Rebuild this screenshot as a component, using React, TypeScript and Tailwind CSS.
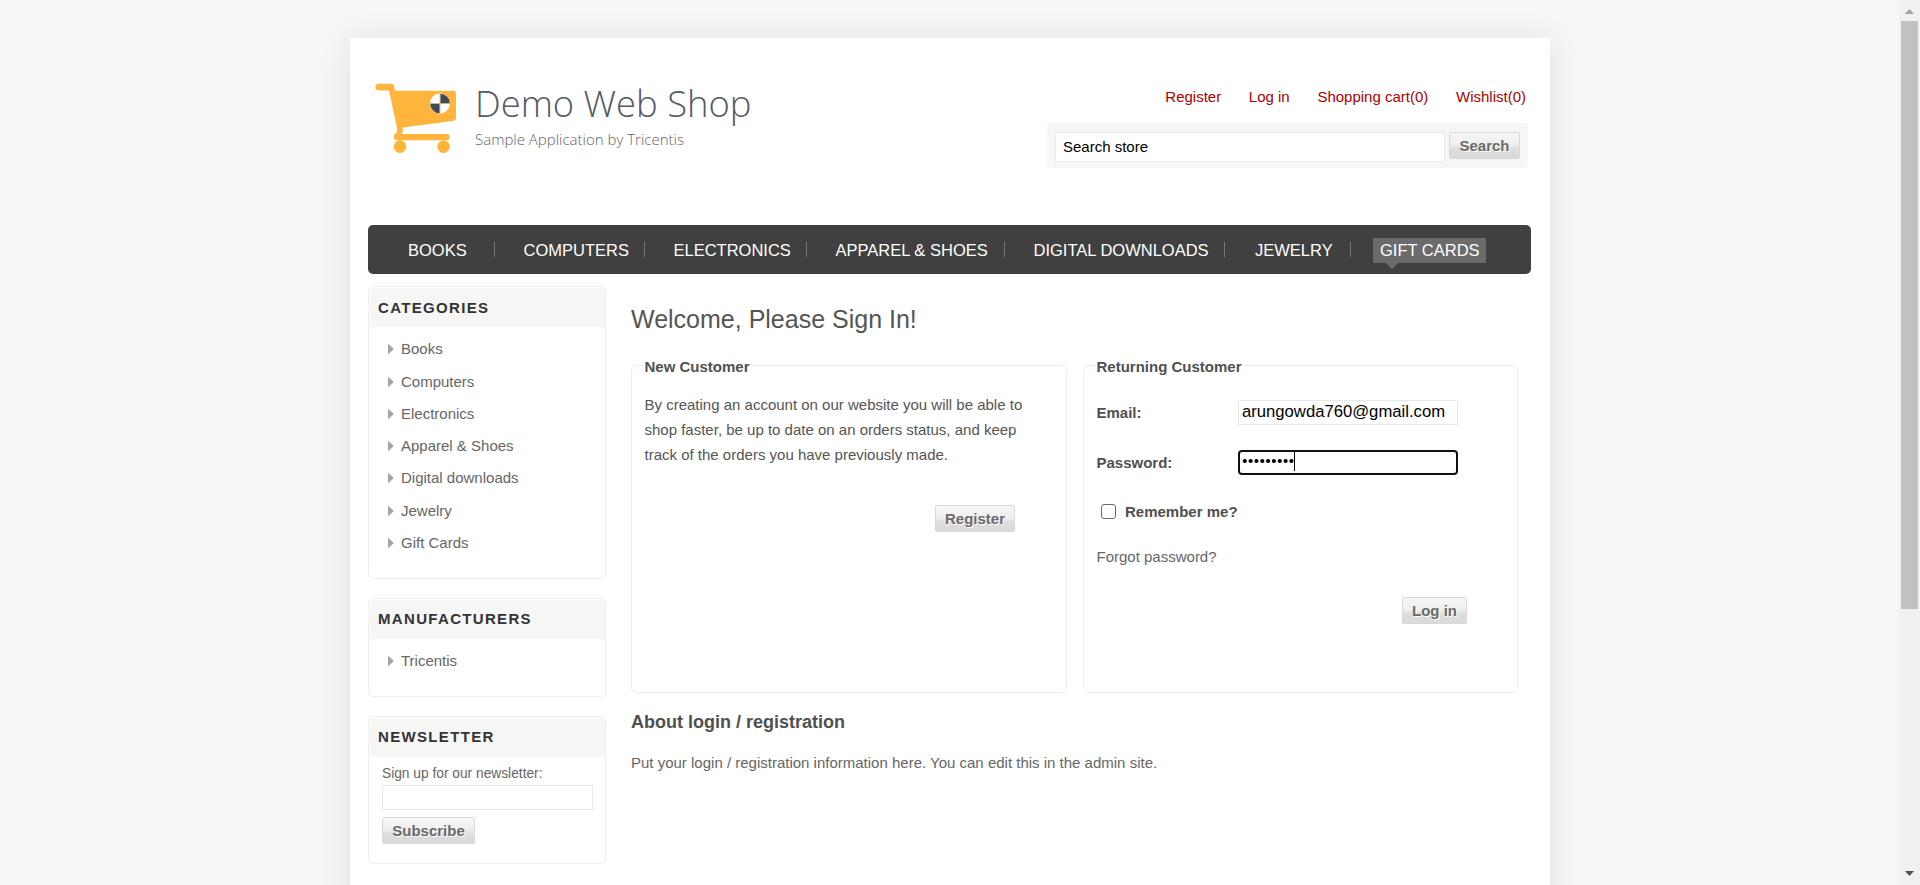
import type { ReactNode } from "react";

const NAV = [
  { label: "BOOKS", item: "w-[127px] pl-[40px]" },
  { label: "COMPUTERS", item: "w-[150px] pl-[28.5px]" },
  { label: "ELECTRONICS", item: "w-[162px] pl-[28.5px]" },
  { label: "APPAREL & SHOES", item: "w-[198px] pl-[28.5px]" },
  { label: "DIGITAL DOWNLOADS", item: "w-[220px] pl-[28.5px]" },
  { label: "JEWELRY", item: "w-[126px] pl-[30px]" },
];

const CATEGORIES = [
  "Books",
  "Computers",
  "Electronics",
  "Apparel & Shoes",
  "Digital downloads",
  "Jewelry",
  "Gift Cards",
];

function Button({ children, className }: { children: ReactNode; className: string }) {
  return (
    <button
      type="button"
      className={`h-[27px] rounded-[2px] border border-[#d9d9d9] bg-[linear-gradient(#f6f6f6_0%,#efefef_45%,#dddddd_65%,#dadada_100%)] text-center text-[15px] leading-[25px] font-bold text-[#6a6a6a] [text-shadow:1px_1px_0_#fff] ${className}`}
    >
      {children}
    </button>
  );
}

function Block({
  title,
  className,
  heading = "leading-[38px]",
  children,
}: {
  title: string;
  className: string;
  heading?: string;
  children: ReactNode;
}) {
  return (
    <section className={`w-[238px] rounded-[5px] border border-[#eee] pt-px pl-px ${className}`}>
      <h2 className={`h-[39px] rounded-t-[5px] bg-[#f6f6f4] pl-[8px] text-[15px] font-bold tracking-[1.33px] text-[#333] ${heading}`}>
        {title}
      </h2>
      {children}
    </section>
  );
}

function LinkItem({ label }: { label: string }) {
  return (
    <li className="flex h-[32.25px] items-center text-[15px] leading-[20px]">
      <svg width="6" height="12" viewBox="0 0 6 12" className="mr-[7px]">
        <path d="M0 0.5 L5.8 6 L0 11.5 Z" fill="#a5a5a5" />
      </svg>
      {label}
    </li>
  );
}

function Logo() {
  return (
    <div className="flex pt-[45px] pl-[25px]">
      <svg width="82" height="71" viewBox="0 0 82 71">
        <g fill="#ffb43c">
          <path d="M3.5 0.8 H16 Q18.5 0.8 19 3 L20 7.7 H78 Q81 7.7 81 10.7 V34.5 Q81 37.5 77.5 38 L27.5 44.5 L28 48 L26.5 51 H72 Q74.6 51.2 74.6 54 Q74.6 57 72 57.2 H22 Q18.7 57 18.9 53.5 Q19 51.5 21.8 49.5 L22.3 46 L14 7.4 H3.5 Q0.5 7.2 0.5 4 Q0.5 1 3.5 0.8 Z" />
          <circle cx="25" cy="63.6" r="6.3" />
          <circle cx="68.5" cy="63.6" r="6.3" />
        </g>
        <circle cx="65" cy="20.5" r="10" fill="#fff" />
        <path d="M65.3 20.2 V10.7 A9.6 9.6 0 0 1 74.8 20.2 Z M64.7 20.8 V30.3 A9.6 9.6 0 0 1 55.2 20.8 Z" fill="#444a54" />
        <path d="M65 10.5 V30.5 M55 20.5 H75" stroke="#c9a878" strokeWidth="0.8" />
      </svg>
      <div className="pl-[18px] font-['Open_Sans',sans-serif] font-light">
        <div className="h-[46px] text-[36.4px] leading-[40px] whitespace-nowrap text-[#555a64]">Demo Web Shop</div>
        <div className="text-[15px] leading-[20px] whitespace-nowrap text-[#5f636c]">Sample Application by Tricentis</div>
      </div>
    </div>
  );
}

function Header() {
  return (
    <header className="flex h-[187px] justify-between">
      <Logo />
      <div className="mr-[22px] flex w-[481px] flex-col pt-[48px]">
        <div className="flex justify-end gap-[27.7px] pr-[2px] text-[15px] leading-[22px] text-[#a00]">
          <a>Register</a>
          <a>Log in</a>
          <a>Shopping cart(0)</a>
          <a>Wishlist(0)</a>
        </div>
        <div className="mt-[15px] flex h-[45px] rounded-[3px] bg-[#f6f6f4] pt-[9px] pl-[8px]">
          <input
            readOnly
            value="Search store"
            className="h-[30px] w-[390px] border border-[#eaeaea] bg-white pb-[2px] pl-[7px] text-[15px] text-black outline-none"
          />
          <Button className="ml-[4px] w-[71px]">Search</Button>
        </div>
      </div>
    </header>
  );
}

function Nav() {
  return (
    <nav className="ml-[18px] flex h-[49px] w-[1163px] rounded-[5px] bg-[#404040] text-[16.5px] leading-[25px] whitespace-nowrap text-white">
      {NAV.map(({ label, item }) => (
        <div key={label} className={`flex justify-between pt-[13px] ${item}`}>
          {label}
          <span className="mt-[4px] h-[15px] w-px bg-[#777]" />
        </div>
      ))}
      <div className="relative mt-[13px] ml-[22px] h-[25px] w-[113px] bg-[#6b6b6b] pl-[7px]">
        GIFT CARDS
        <svg width="12" height="6" viewBox="0 0 12 6" className="absolute top-[25px] left-[13px]">
          <path d="M0 0 H12 L6 6 Z" fill="#6b6b6b" />
        </svg>
      </div>
    </nav>
  );
}

function Sidebar() {
  return (
    <aside className="flex w-[238px] flex-col">
      <Block title="CATEGORIES" className="h-[293px]" heading="leading-[40px]">
        <ul className="pt-[6.3px] pl-[18px]">
          {CATEGORIES.map((c) => (
            <LinkItem key={c} label={c} />
          ))}
        </ul>
      </Block>
      <Block title="MANUFACTURERS" className="mt-[19px] h-[99px]">
        <ul className="pt-[6px] pl-[18px]">
          <LinkItem label="Tricentis" />
        </ul>
      </Block>
      <Block title="NEWSLETTER" className="mt-[19px] h-[148px]">
        <div className="flex flex-col pt-[7px] pl-[12px]">
          <span className="text-[13.75px] leading-[20px]">Sign up for our newsletter:</span>
          <input readOnly className="mt-px h-[25px] w-[211px] border border-[#e8e8e8] outline-none" />
          <Button className="mt-[7px] w-[93px]">Subscribe</Button>
        </div>
      </Block>
    </aside>
  );
}

function Panel({ title, className, children }: { title: string; className: string; children: ReactNode }) {
  return (
    <section className={`h-[328px] rounded-[6px] border border-[#eee] px-[12.5px] ${className}`}>
      <h3 className="mt-[-9px] w-fit bg-white text-[15px] leading-[20px] font-bold text-[#505050]">{title}</h3>
      {children}
    </section>
  );
}

function Main() {
  return (
    <main className="ml-[25px] flex w-[888px] flex-col">
      <h1 className="mt-[17px] text-[25px] leading-[32px] whitespace-nowrap text-[#555]">Welcome, Please Sign In!</h1>
      <div className="mt-[30px] flex gap-[16px]">
        <Panel title="New Customer" className="w-[436px]">
          <p className="mt-[15px] text-[15px] leading-[25px] whitespace-nowrap text-[#555]">
            By creating an account on our website you will be able to
            <br />
            shop faster, be up to date on an orders status, and keep
            <br />
            track of the orders you have previously made.
          </p>
          <Button className="mt-[38px] ml-[290.5px] block w-[80px]">Register</Button>
        </Panel>
        <Panel title="Returning Customer" className="w-[435px]">
          <div className="mt-[23px] flex h-[25px] text-[15px] font-bold text-[#505050]">
            <label className="w-[141.5px] leading-[26px]">Email:</label>
            <input
              readOnly
              value="arungowda760@gmail.com"
              className="w-[220px] border border-[#e8e8e8] pb-[2px] pl-[3px] text-[16.67px] font-normal text-black outline-none"
            />
          </div>
          <div className="mt-[25px] flex h-[25px] text-[15px] font-bold text-[#505050]">
            <label className="w-[141.5px] leading-[26px]">Password:</label>
            <div className="flex w-[220px] items-start rounded-[4px] border-2 border-[#101010] pl-[2px]">
              <svg width="52" height="20" viewBox="0 0 52 20">
                {[0, 1, 2, 3, 4, 5, 6, 7, 8].map((i) => (
                  <circle key={i} cx={2.8 + i * 5.83} cy="9" r="2.1" fill="#000" />
                ))}
              </svg>
              <span className="h-[19px] w-px bg-black" />
            </div>
          </div>
          <div className="mt-[25px] flex h-[22px] items-center text-[15px] font-bold text-[#505050]">
            <span className="ml-[4.5px] h-[15px] w-[15px] rounded-[3px] border border-[#6b6b6b] bg-white" />
            <span className="ml-[9px] pt-[2px]">Remember me?</span>
          </div>
          <div className="mt-[25px] text-[15px] leading-[20px] text-[#666]">Forgot password?</div>
          <Button className="mt-[30px] ml-[305.5px] block w-[65px]">Log in</Button>
        </Panel>
      </div>
      <h3 className="mt-[17px] text-[18px] leading-[24px] font-bold text-[#505050]">About login / registration</h3>
      <p className="mt-[19px] text-[15px] leading-[20px]">
        Put your login / registration information here. You can edit this in the admin site.
      </p>
    </main>
  );
}

function Scrollbar() {
  return (
    <div className="flex h-[885px] w-[21px] flex-col items-center justify-between bg-[#f1f1f1]">
      <div className="flex flex-col items-center">
        <svg width="9" height="5" viewBox="0 0 9 5" className="mt-[9px] mb-[7px]">
          <path d="M4.5 0 L9 5 H0 Z" fill="#a3a3a3" />
        </svg>
        <div className="h-[588px] w-[17px] bg-[#c1c1c1]" />
      </div>
      <svg width="9" height="5" viewBox="0 0 9 5" className="mb-[9px]">
        <path d="M4.5 5 L9 0 H0 Z" fill="#505050" />
      </svg>
    </div>
  );
}

export default function App() {
  return (
    <div className="flex h-[885px] w-[1920px] overflow-hidden bg-[#f6f6f4] font-['Liberation_Sans',Arial,sans-serif] text-[#666]">
      <div className="flex h-[885px] w-[1899px] overflow-hidden pt-[38px] pl-[350px]">
        <div className="h-[1000px] w-[1200px] bg-white shadow-[0_2px_32px_rgba(0,0,0,0.09)]">
          <Header />
          <Nav />
          <div className="flex pt-[12px] pl-[18px]">
            <Sidebar />
            <Main />
          </div>
        </div>
      </div>
      <Scrollbar />
    </div>
  );
}
